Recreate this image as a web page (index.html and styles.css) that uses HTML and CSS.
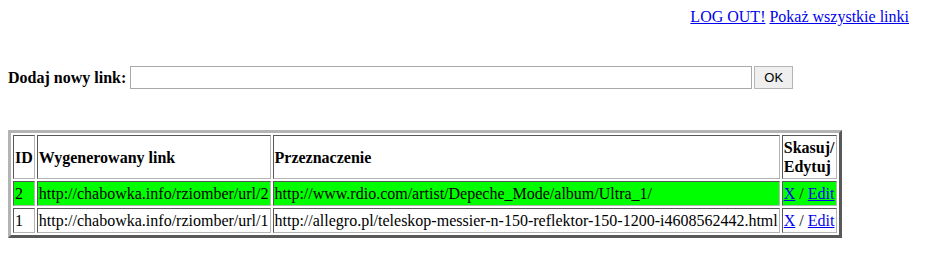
FILE: index.html
```html
<!DOCTYPE html>
<html lang="pl">
<head>
    <meta charset="UTF-8">
    <title>Skracacz linków</title>
    <link rel="stylesheet" href="styles.css">
</head>
<body>
    <div class="menu">
        <a href="#">LOG OUT!</a> <a href="#">Pokaż wszystkie linki</a>
    </div>

    <form class="add-form" onsubmit="return false;">
        <b>Dodaj nowy link:</b>
        <input type="text" class="url-input" name="url">
        <button type="submit" class="ok-btn">OK</button>
    </form>

    <table class="links">
        <tr>
            <th>ID</th>
            <th>Wygenerowany link</th>
            <th>Przeznaczenie</th>
            <th class="actions">Skasuj/<br>Edytuj</th>
        </tr>
        <tr class="fresh">
            <td>2</td>
            <td>http://chabowka.info/rziomber/url/2</td>
            <td>http://www.rdio.com/artist/Depeche_Mode/album/Ultra_1/</td>
            <td class="actions"><a href="#">X</a> / <a href="#">Edit</a></td>
        </tr>
        <tr>
            <td>1</td>
            <td>http://chabowka.info/rziomber/url/1</td>
            <td>http://allegro.pl/teleskop-messier-n-150-reflektor-150-1200-i4608562442.html</td>
            <td class="actions"><a href="#">X</a> / <a href="#">Edit</a></td>
        </tr>
    </table>
</body>
</html>
```

FILE: styles.css
```css
body {
    font-family: "Liberation Serif", "Times New Roman", serif;
    font-size: 16px;
    margin: 8px;
    color: #000;
}
a {
    color: #0000ee;
}
.menu {
    text-align: right;
    padding-right: 27px;
}
.add-form {
    margin: 40px 0 0 0;
    display: flex;
    align-items: center;
}
.add-form b {
    margin-right: 4px;
}
.url-input {
    width: 618px;
    height: 19px;
    border: 1px solid #a9a9a9;
    padding: 1px;
    margin: 0 2px 0 0;
}
.ok-btn {
    font-family: Arial, "Liberation Sans", sans-serif;
    font-size: 13px;
    width: 39px;
    height: 23px;
    background: #efefef;
    border: 1px solid #b5b5b5;
    padding: 0;
    margin: 0;
}
.links {
    margin-top: 41px;
    border: 3px solid;
    border-color: #b4b4b4 #585858 #585858 #b4b4b4;
    border-spacing: 2px;
}
.links th,
.links td {
    border: 1px solid;
    border-color: #585858 #b4b4b4 #b4b4b4 #585858;
    padding: 2px 1px;
    line-height: 19px;
    text-align: left;
}
.links .actions {
    padding-right: 2px;
}
.links th {
    font-weight: bold;
}
.links tr.fresh td {
    background: #00ff00;
}
```
